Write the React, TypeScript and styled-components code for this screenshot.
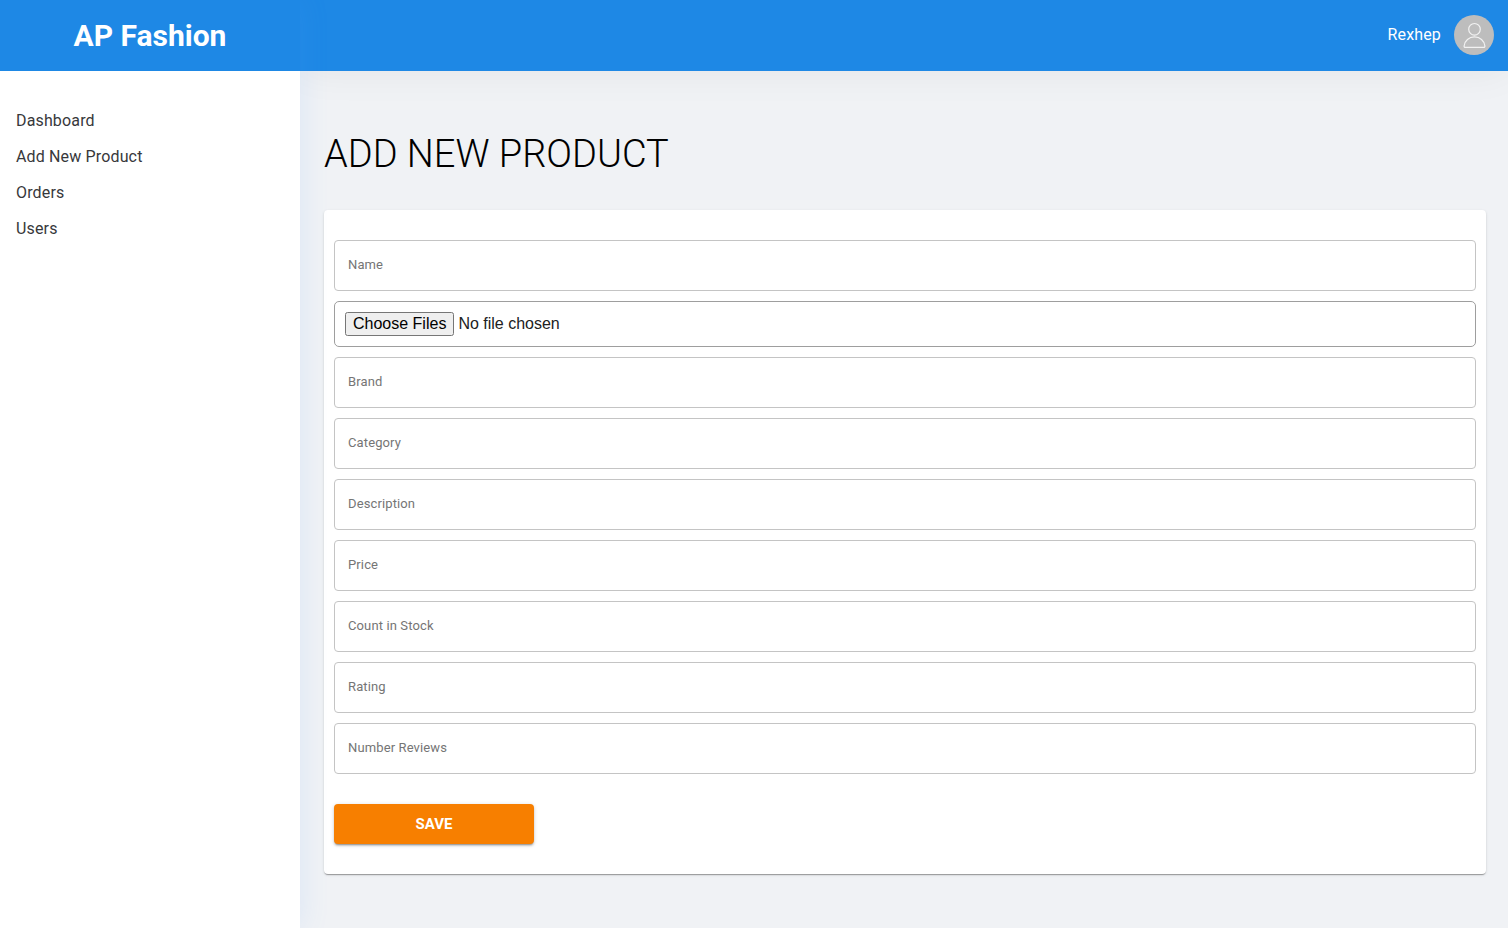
import React from "react";
import styled, { createGlobalStyle } from "styled-components";

const GlobalStyle = createGlobalStyle`
  *, *::before, *::after { box-sizing: border-box; }
  body {
    margin: 0;
    background: #f0f2f5;
    color: #000;
    font-family: Roboto, "Liberation Sans", sans-serif;
    font-size: 16px;
  }
`;

const Page = styled.div`
  display: grid;
  grid-template-columns: 300px minmax(0, 1fr);
  min-height: 100vh;
`;

const Sidebar = styled.aside`
  position: relative;
  z-index: 2;
  background: #fff;
  box-shadow: 0 0 28px 0 rgba(82, 158, 255, 0.14);
`;

const Brand = styled.div`
  display: flex;
  align-items: center;
  justify-content: center;
  height: 71px;
  background: #1e88e5;
  color: #fff;
  font-size: 30px;
  font-weight: 700;
`;

const NavList = styled.ul`
  display: flex;
  flex-direction: column;
  gap: 12px;
  margin: 0;
  padding: 38px 16px;
  list-style: none;
`;

const NavLink = styled.a`
  display: block;
  color: #37383b;
  line-height: 24px;
  letter-spacing: 0.00938em;
  text-decoration: none;
`;

const Content = styled.div`
  display: flex;
  flex-direction: column;
  min-width: 0;
`;

const TopBar = styled.header`
  display: flex;
  align-items: center;
  justify-content: flex-end;
  gap: 13px;
  height: 71px;
  padding: 0 14px;
  border-bottom: 1px solid #1e88e5;
  background: #1e88e5;
  box-shadow: 0 0 40px 0 rgba(0, 0, 0, 0.06);
`;

const UserName = styled.span`
  color: #fff;
  line-height: 24px;
  letter-spacing: 0.00938em;
`;

const Avatar = styled.span`
  display: flex;
  align-items: center;
  justify-content: center;
  width: 40px;
  height: 40px;
  border-radius: 50%;
  background: #bdbdbd;
`;

const Main = styled.main`
  padding: 60px 22px 53px 24px;
`;

const Title = styled.h1`
  margin: 0 0 33px;
  font-size: 38px;
  font-weight: 300;
  line-height: 46px;
  text-transform: uppercase;
`;

const Card = styled.form`
  display: flex;
  flex-direction: column;
  gap: 10px;
  padding: 30px 10px;
  border-radius: 4px;
  background: #fff;
  box-shadow: 0 2px 1px -1px rgba(0, 0, 0, 0.2), 0 1px 1px 0 rgba(0, 0, 0, 0.14),
    0 1px 3px 0 rgba(0, 0, 0, 0.12);
`;

const Field = styled.label`
  display: flex;
  align-items: center;
  gap: 12px;
  height: 51px;
  padding: 0 13px 2px;
  border: 1px solid #c4c4c4;
  border-radius: 4px;
`;

const FieldName = styled.span`
  color: #757575;
  font-size: 13px;
  line-height: 20px;
  letter-spacing: 0.00938em;
`;

const FieldInput = styled.input`
  flex: 1;
  min-width: 0;
  border: 0;
  outline: 0;
  background: transparent;
  font: inherit;
`;

const FileInput = styled.input`
  display: block;
  width: 100%;
  height: 46px;
  padding: 10px;
  border: 1px solid #9e9e9e;
  border-radius: 5px;
  color: #212121;
  font-family: "Liberation Sans", Arial, sans-serif;
  font-size: 16px;
`;

const SaveButton = styled.button`
  width: 200px;
  height: 40px;
  margin-top: 20px;
  border: 0;
  border-radius: 4px;
  background: #f77f00;
  box-shadow: 0 2px 1px -1px rgba(0, 0, 0, 0.2), 0 2px 2px 0 rgba(0, 0, 0, 0.14),
    0 1px 4px 0 rgba(0, 0, 0, 0.16);
  color: #fff;
  font-family: inherit;
  font-size: 15px;
  font-weight: 700;
  text-transform: uppercase;
`;

const navItems = ["Dashboard", "Add New Product", "Orders", "Users"];
const detailFields = [
  "Brand",
  "Category",
  "Description",
  "Price",
  "Count in Stock",
  "Rating",
  "Number Reviews",
];

function TextField({ name }: { name: string }) {
  return (
    <Field>
      <FieldName>{name}</FieldName>
      <FieldInput type="text" name={name} />
    </Field>
  );
}

function UserIcon() {
  return (
    <svg width="26" height="28" viewBox="0 0 26 28" fill="none" stroke="#f2f2f2" strokeWidth="1.2" aria-hidden="true">
      <circle cx="13.5" cy="8.3" r="5.8" />
      <path d="M4.300 26.400h18.400c.8 0 1.300-.6 1.200-1.400C23.400 19.600 18.900 15.900 13.500 15.900S3.600 19.600 3.100 25c-.1.800.4 1.400 1.200 1.400z" />
    </svg>
  );
}

export default function App() {
  return (
    <>
      <GlobalStyle />
      <Page>
        <Sidebar>
          <Brand>AP Fashion</Brand>
          <nav>
            <NavList>
              {navItems.map((item) => (
                <li key={item}>
                  <NavLink href="#">{item}</NavLink>
                </li>
              ))}
            </NavList>
          </nav>
        </Sidebar>
        <Content>
          <TopBar>
            <UserName>Rexhep</UserName>
            <Avatar>
              <UserIcon />
            </Avatar>
          </TopBar>
          <Main>
            <Title>Add new product</Title>
            <Card onSubmit={(event) => event.preventDefault()}>
              <TextField name="Name" />
              <FileInput type="file" multiple aria-label="Product images" />
              {detailFields.map((name) => (
                <TextField key={name} name={name} />
              ))}
              <SaveButton type="submit">Save</SaveButton>
            </Card>
          </Main>
        </Content>
      </Page>
    </>
  );
}
